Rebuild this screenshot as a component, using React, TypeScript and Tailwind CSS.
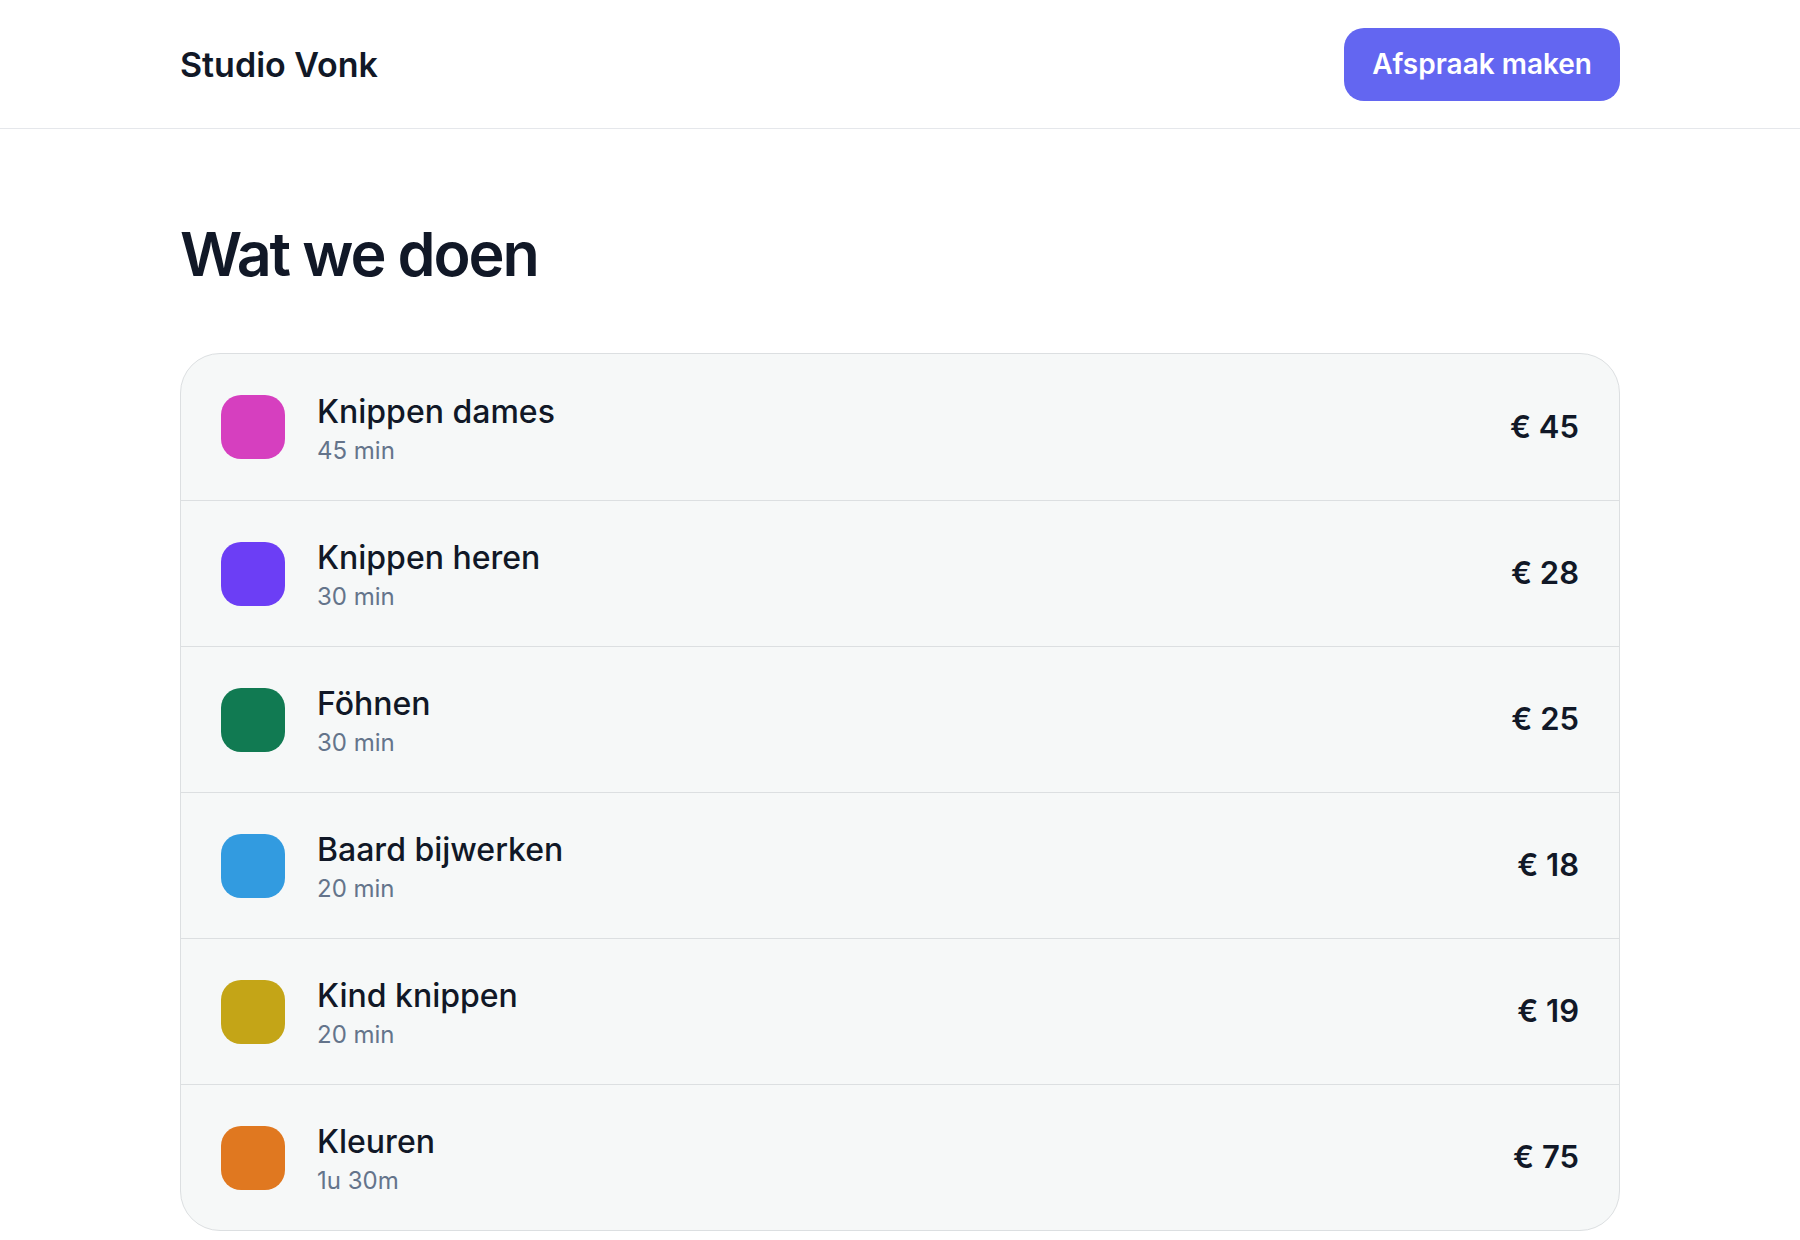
import React from 'react';

interface Service {
  name: string;
  duration: string;
  price: number;
  color: string;
}

const services: Service[] = [
  { name: 'Knippen dames', duration: '45 min', price: 45, color: 'bg-[#d63fbf]' },
  { name: 'Knippen heren', duration: '30 min', price: 28, color: 'bg-[#6c3ef5]' },
  { name: 'Föhnen', duration: '30 min', price: 25, color: 'bg-[#117a52]' },
  { name: 'Baard bijwerken', duration: '20 min', price: 18, color: 'bg-[#329be0]' },
  { name: 'Kind knippen', duration: '20 min', price: 19, color: 'bg-[#c4a517]' },
  { name: 'Kleuren', duration: '1u 30m', price: 75, color: 'bg-[#e07820]' },
];

export default function App() {
  return (
    <div className="min-h-screen bg-white text-[#111827] font-['Inter','Noto_Sans',sans-serif]">
      {/* Header */}
      <header className="border-b border-[#e5e7eb]">
        <div className="max-w-[1440px] mx-auto h-[128px] flex items-center justify-between">
          <span className="text-[34px] font-semibold">Studio Vonk</span>
          <button className="h-[73px] px-[28px] rounded-[20px] bg-[#6366f1] text-white text-[28px] font-semibold">
            Afspraak maken
          </button>
        </div>
      </header>

      <main className="max-w-[1440px] mx-auto">
        <h1 className="mt-[90px] mb-[64px] text-[61px] leading-[70px] font-semibold tracking-[-0.035em]">
          Wat we doen
        </h1>

        {/* Services list */}
        <ul className="rounded-[40px] border border-[#dcdfe1] bg-[#f6f8f8] overflow-hidden">
          {services.map((s, idx) => (
            <li
              key={idx}
              className={`h-[146px] px-10 flex items-center gap-8 ${idx > 0 ? 'border-t border-[#dcdfe1]' : ''}`}
            >
              <div className={`w-16 h-16 rounded-[20px] shrink-0 ${s.color}`} />
              <div className="flex flex-col pt-1">
                <span className="text-[32px] leading-[40px] font-medium">{s.name}</span>
                <span className="mt-[3px] text-[24px] leading-[32px] text-[#64748b]">{s.duration}</span>
              </div>
              <span className="ml-auto text-[31px] font-semibold">€ {s.price}</span>
            </li>
          ))}
        </ul>
      </main>
    </div>
  );
}
